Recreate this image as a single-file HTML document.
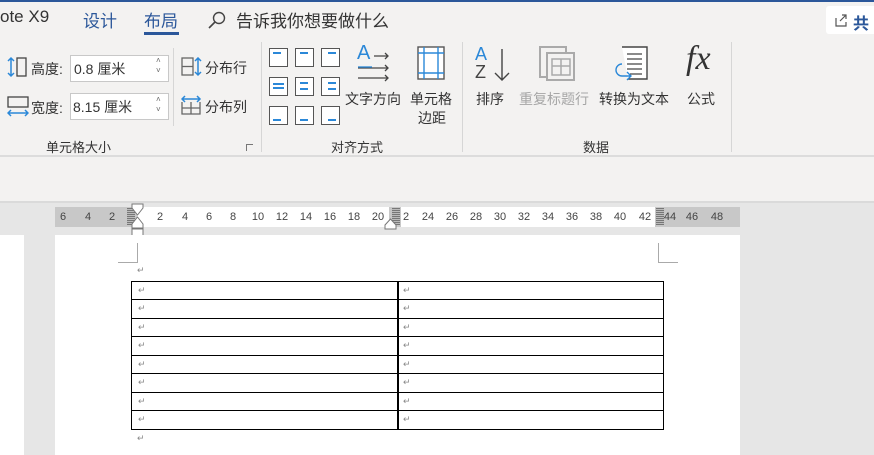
<!DOCTYPE html>
<html><head><meta charset="utf-8"><style>
*{margin:0;padding:0;box-sizing:border-box}
body{width:874px;height:455px;overflow:hidden;position:relative;background:#e6e6e6;font-family:"Liberation Sans","Noto Sans CJK SC",sans-serif;color:#333}
.a{position:absolute}
.t{font-size:13px;white-space:nowrap}
.box{position:absolute;width:19px;height:19px;border:1.5px solid #555;background:#fff}
.box i{position:absolute;height:1.5px;background:#2b88d8}
.rn{position:absolute;top:211px;font-size:11px;color:#444;transform:translateX(-50%);font-family:"Liberation Sans",sans-serif}
.hatch{position:absolute;top:208px;width:8px;height:17px;background:repeating-linear-gradient(0deg,#777 0 1px,#bbb 1px 2px)}
.row{position:absolute;left:131px;width:533px;border-top:1.5px solid #000}
.pm{position:absolute;font-size:9px;color:#888}
</style></head><body>
<div class="a" style="left:0;top:0;width:874px;height:157px;background:#f3f2f1"></div>
<div class="a" style="left:0;top:0;width:874px;height:2px;background:#2b579a"></div>
<div class="a t" style="left:0;top:7px;font-size:17px;color:#333">ote X9</div>
<div class="a t" style="left:83px;top:7px;font-size:17px;color:#2b579a">设计</div>
<div class="a t" style="left:144px;top:7px;font-size:17px;color:#2b579a">布局</div>
<div class="a" style="left:144px;top:32px;width:35px;height:3px;background:#2b579a"></div>
<svg class="a" style="left:207px;top:10px" width="20" height="20"><circle cx="12" cy="8" r="5.5" fill="none" stroke="#444" stroke-width="1.4"/><line x1="8" y1="12" x2="2" y2="18" stroke="#444" stroke-width="1.6"/></svg>
<div class="a t" style="left:236px;top:7px;font-size:17px;color:#333">告诉我你想要做什么</div>
<div class="a" style="left:826px;top:6px;width:60px;height:28px;background:#fff;border-radius:3px"></div>
<svg class="a" style="left:834px;top:13px" width="14" height="14"><path d="M2 5v8h10v-4M6 8l6-6M8 2h4v4" fill="none" stroke="#555" stroke-width="1.2"/></svg>
<div class="a t" style="left:853px;top:10px;font-size:16px;font-weight:bold;color:#2b579a">共</div>

<svg class="a" style="left:7px;top:56px" width="22" height="22"><path d="M4 2v18M1 5l3-3 3 3M1 17l3 3 3-3" fill="none" stroke="#2b88d8" stroke-width="1.5"/><rect x="10" y="2" width="9" height="18" fill="none" stroke="#444" stroke-width="1.3"/></svg>
<div class="a t" style="left:31px;top:59px;font-size:14px">高度:</div>
<div class="a" style="left:70px;top:55px;width:99px;height:27px;background:#fff;border:1px solid #c8c8c8"></div>
<div class="a t" style="left:74px;top:59px;font-size:14px">0.8 厘米</div>
<div class="a" style="left:156px;top:56px;font-size:8px;color:#666;line-height:10px">˄<br>˅</div>
<svg class="a" style="left:7px;top:95px" width="22" height="22"><rect x="1" y="2" width="20" height="10" fill="none" stroke="#444" stroke-width="1.3"/><path d="M1 18h20M4 15l-3 3 3 3M18 15l3 3-3 3" fill="none" stroke="#2b88d8" stroke-width="1.5"/></svg>
<div class="a t" style="left:31px;top:98px;font-size:14px">宽度:</div>
<div class="a" style="left:70px;top:93px;width:99px;height:27px;background:#fff;border:1px solid #c8c8c8"></div>
<div class="a t" style="left:73px;top:97px;font-size:14px">8.15 厘米</div>
<div class="a" style="left:156px;top:95px;font-size:8px;color:#666;line-height:10px">˄<br>˅</div>
<div class="a" style="left:173px;top:48px;width:1px;height:78px;background:#d6d6d6"></div>
<svg class="a" style="left:181px;top:57px" width="22" height="20"><rect x="1" y="1" width="11" height="17" fill="none" stroke="#666" stroke-width="1.3"/><line x1="1" y1="9.5" x2="12" y2="9.5" stroke="#666" stroke-width="1.3"/><path d="M17 1v17M14 4l3-3 3 3M14 15l3 3 3-3" fill="none" stroke="#2b88d8" stroke-width="1.5"/></svg>
<div class="a t" style="left:205px;top:58px;font-size:14px">分布行</div>
<svg class="a" style="left:181px;top:95px" width="22" height="20"><path d="M1 7v12h18V7M10 7v12M1 13h18" fill="none" stroke="#666" stroke-width="1.3"/><path d="M1 4h18M4 1l-3 3 3 3M16 1l3 3-3 3" fill="none" stroke="#2b88d8" stroke-width="1.5"/></svg>
<div class="a t" style="left:205px;top:97px;font-size:14px">分布列</div>
<div class="a t" style="left:46px;top:137px;font-size:13px">单元格大小</div>
<div class="a" style="left:246px;top:144px;width:7px;height:7px;border-left:1px solid #777;border-top:1px solid #777"></div>
<div class="a" style="left:261px;top:42px;width:1px;height:110px;background:#d6d6d6"></div>

<div class="box" style="left:269px;top:48px"><i style="left:3px;top:3px;width:8px"></i></div>
<div class="box" style="left:295px;top:48px"><i style="left:4px;top:3px;width:8px"></i></div>
<div class="box" style="left:321px;top:48px"><i style="left:6px;top:3px;width:8px"></i></div>
<div class="box" style="left:269px;top:77px"><i style="left:3px;top:5px;width:11px"></i><i style="left:3px;top:9px;width:11px"></i></div>
<div class="box" style="left:295px;top:77px"><i style="left:4px;top:4px;width:8px"></i><i style="left:4px;top:10px;width:8px"></i></div>
<div class="box" style="left:321px;top:77px"><i style="left:6px;top:4px;width:8px"></i><i style="left:6px;top:10px;width:8px"></i></div>
<div class="box" style="left:269px;top:106px"><i style="left:3px;top:12px;width:8px"></i></div>
<div class="box" style="left:295px;top:106px"><i style="left:4px;top:12px;width:8px"></i></div>
<div class="box" style="left:321px;top:106px"><i style="left:6px;top:12px;width:8px"></i></div>
<div class="a" style="left:357px;top:42px;font-size:20px;color:#2b88d8">A</div>
<svg class="a" style="left:356px;top:48px" width="40" height="34"><path d="M18 8h14M29 5l3 3-3 3M2 20h30M29 17l3 3-3 3M2 30h30M29 27l3 3-3 3" fill="none" stroke="#444" stroke-width="1.3"/><line x1="2" y1="19" x2="16" y2="19" stroke="#2b88d8" stroke-width="1.3"/></svg>
<div class="a t" style="left:345px;top:89px;font-size:14px">文字方向</div>
<svg class="a" style="left:417px;top:46px" width="30" height="36"><rect x="1" y="1" width="26" height="32" fill="#fff" stroke="#555" stroke-width="1.4"/><path d="M7 1v32M21 1v32M1 7h26M1 27h26" stroke="#2b88d8" stroke-width="1.4"/></svg>
<div class="a t" style="left:410px;top:89px;font-size:14px">单元格</div>
<div class="a t" style="left:418px;top:108px;font-size:14px">边距</div>
<div class="a t" style="left:331px;top:137px;font-size:13px">对齐方式</div>
<div class="a" style="left:462px;top:42px;width:1px;height:110px;background:#d6d6d6"></div>

<div class="a" style="left:475px;top:45px;font-size:18px;color:#2b88d8;line-height:18px">A</div>
<div class="a" style="left:475px;top:63px;font-size:18px;color:#444;line-height:18px">Z</div>
<svg class="a" style="left:492px;top:48px" width="20" height="34"><path d="M10 1v31M3 25l7 7 7-7" fill="none" stroke="#444" stroke-width="1.4"/></svg>
<div class="a t" style="left:476px;top:89px;font-size:14px">排序</div>
<svg class="a" style="left:539px;top:46px" width="38" height="36"><rect x="1" y="1" width="26" height="30" fill="none" stroke="#aaa" stroke-width="2"/><rect x="8" y="7" width="27" height="27" fill="#f3f2f1" stroke="#aaa" stroke-width="2"/><path d="M13 13h18v16H13zM13 20h18M22 13v16" fill="none" stroke="#aaa" stroke-width="1.5"/></svg>
<div class="a t" style="left:519px;top:89px;font-size:14px;color:#a6a6a6">重复标题行</div>
<svg class="a" style="left:614px;top:46px" width="40" height="38"><path d="M8 1h25v32H14" fill="#fff" stroke="#444" stroke-width="1.4"/><path d="M13 8h15M13 13h15M13 18h15M13 23h15M16 28h12" stroke="#444" stroke-width="1.2"/><path d="M8 18a6 6 0 0 0 0 12h8M13 26l4 4-4 4" fill="none" stroke="#2b88d8" stroke-width="1.4"/></svg>
<div class="a t" style="left:599px;top:89px;font-size:14px">转换为文本</div>
<div class="a" style="left:686px;top:40px;font-size:34px;font-style:italic;font-family:'Liberation Serif',serif;color:#333">fx</div>
<div class="a t" style="left:687px;top:89px;font-size:14px">公式</div>
<div class="a t" style="left:583px;top:137px;font-size:13px">数据</div>
<div class="a" style="left:731px;top:42px;width:1px;height:110px;background:#d6d6d6"></div>
<div class="a" style="left:0;top:155px;width:874px;height:2px;background:#dcdcdc"></div>
<div class="a" style="left:0;top:157px;width:874px;height:45px;background:#f3f2f1"></div>
<div class="a" style="left:0;top:201px;width:874px;height:2px;background:#dadada"></div>

<div class="a" style="left:55px;top:207px;width:685px;height:20px;background:#c8c8c8"></div>
<div class="a" style="left:137px;top:207px;width:252px;height:20px;background:#fff"></div>
<div class="a" style="left:401px;top:207px;width:254px;height:20px;background:#fff"></div>
<div class="hatch" style="left:127px"></div>
<div class="hatch" style="left:392px"></div>
<div class="hatch" style="left:656px"></div>
<span class="rn" style="left:63px">6</span><span class="rn" style="left:88px">4</span><span class="rn" style="left:112px">2</span>
<span class="rn" style="left:160px">2</span><span class="rn" style="left:185px">4</span><span class="rn" style="left:209px">6</span><span class="rn" style="left:233px">8</span><span class="rn" style="left:258px">10</span><span class="rn" style="left:282px">12</span><span class="rn" style="left:306px">14</span><span class="rn" style="left:330px">16</span><span class="rn" style="left:354px">18</span><span class="rn" style="left:378px">20</span>
<span class="rn" style="left:406px">2</span><span class="rn" style="left:428px">24</span><span class="rn" style="left:452px">26</span><span class="rn" style="left:476px">28</span><span class="rn" style="left:500px">30</span><span class="rn" style="left:524px">32</span><span class="rn" style="left:548px">34</span><span class="rn" style="left:572px">36</span><span class="rn" style="left:596px">38</span><span class="rn" style="left:620px">40</span><span class="rn" style="left:645px">42</span><span class="rn" style="left:670px">44</span><span class="rn" style="left:692px">46</span><span class="rn" style="left:717px">48</span>
<svg class="a" style="left:131px;top:203px" width="14" height="34"><path d="M1 1h11v4L6.5 12 1 5z M6.5 14 12 21v4H1v-4z" fill="#fff" stroke="#777"/><rect x="1" y="26" width="11" height="7" fill="#fff" stroke="#777"/></svg>
<svg class="a" style="left:384px;top:218px" width="14" height="12"><path d="M6.5 1 12 7v4H1V7z" fill="#fff" stroke="#777"/></svg>

<div class="a" style="left:0;top:235px;width:24px;height:220px;background:#fff"></div>
<div class="a" style="left:55px;top:235px;width:685px;height:220px;background:#fff"></div>
<div class="a" style="left:137px;top:243px;width:1px;height:19px;background:#aaa"></div>
<div class="a" style="left:118px;top:262px;width:20px;height:1px;background:#aaa"></div>
<div class="a" style="left:658px;top:243px;width:1px;height:19px;background:#aaa"></div>
<div class="a" style="left:658px;top:262px;width:20px;height:1px;background:#aaa"></div>
<div class="pm" style="left:137px;top:265px">↵</div>
<div class="a" style="left:131px;top:281px;width:533px;height:149px;border:1.5px solid #000"></div>
<div class="a" style="left:397px;top:281px;width:1.5px;height:149px;background:#000"></div>
<div class="row" style="top:299px"></div><div class="row" style="top:318px"></div><div class="row" style="top:336px"></div><div class="row" style="top:355px"></div><div class="row" style="top:373px"></div><div class="row" style="top:392px"></div><div class="row" style="top:410px"></div>
<div class="pm" style="left:138px;top:285px">↵</div><div class="pm" style="left:403px;top:285px">↵</div>
<div class="pm" style="left:138px;top:303px">↵</div><div class="pm" style="left:403px;top:303px">↵</div>
<div class="pm" style="left:138px;top:322px">↵</div><div class="pm" style="left:403px;top:322px">↵</div>
<div class="pm" style="left:138px;top:340px">↵</div><div class="pm" style="left:403px;top:340px">↵</div>
<div class="pm" style="left:138px;top:359px">↵</div><div class="pm" style="left:403px;top:359px">↵</div>
<div class="pm" style="left:138px;top:377px">↵</div><div class="pm" style="left:403px;top:377px">↵</div>
<div class="pm" style="left:138px;top:396px">↵</div><div class="pm" style="left:403px;top:396px">↵</div>
<div class="pm" style="left:138px;top:414px">↵</div><div class="pm" style="left:403px;top:414px">↵</div>
<div class="pm" style="left:137px;top:433px">↵</div>
</body></html>
